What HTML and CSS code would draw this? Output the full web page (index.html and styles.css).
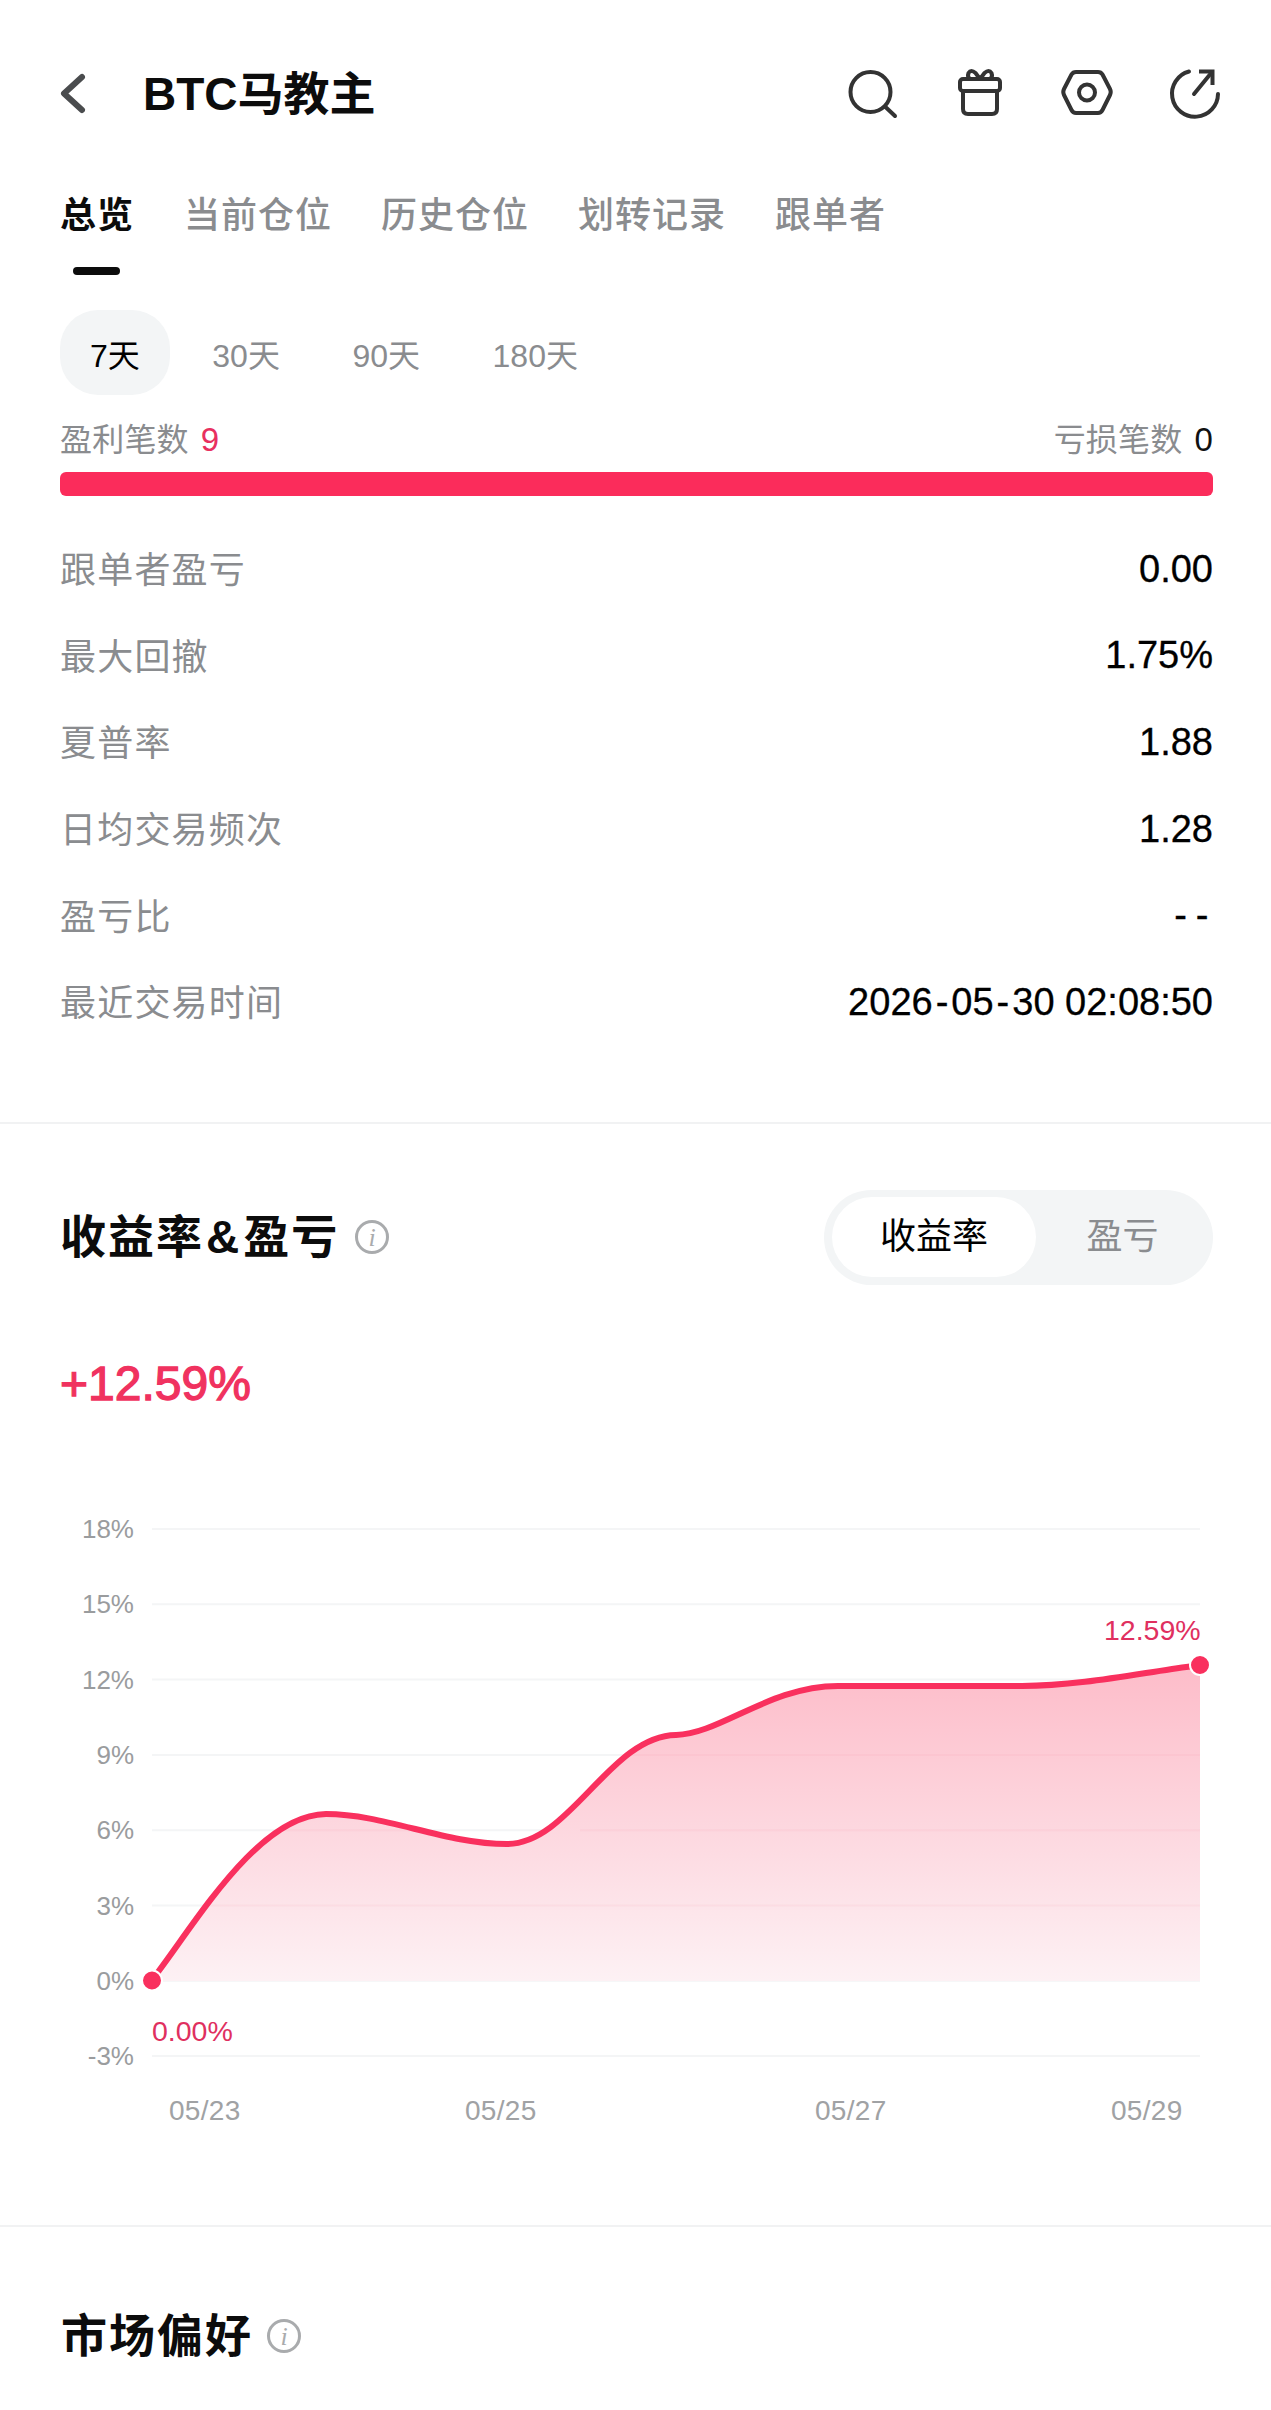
FILE: index.html
```html
<!DOCTYPE html>
<html lang="zh-CN">
<head>
    <meta charset="UTF-8">
    <meta name="viewport" content="width=device-width, initial-scale=1.0">
    <title>BTC马教主</title>
    <link rel="stylesheet" href="styles.css">
</head>
<body>
    <header class="header">
        <svg class="back" width="40" height="60" viewBox="0 0 40 60" fill="none" stroke="#4a4c4e" stroke-width="6" stroke-linecap="round" stroke-linejoin="round">
            <path d="M32 15L14 31.500L32 48"/>
        </svg>
        <div class="title">BTC马教主</div>
        <div class="actions">
            <svg width="60" height="60" viewBox="0 0 60 60" fill="none" stroke="#333" stroke-width="4" stroke-linecap="round" stroke-linejoin="round">
                <circle cx="29.500" cy="30" r="20"/>
                <path d="M44.500 45L54 54"/>
            </svg>
            <svg width="60" height="60" viewBox="0 0 60 60" fill="none" stroke="#333" stroke-width="4" stroke-linecap="round" stroke-linejoin="round">
                <rect x="11" y="17" width="40" height="12" rx="3"/>
                <path d="M14 29V47Q14 52 19 52H43Q48 52 48 47V29"/>
                <path d="M31 17L26.500 11Q22 7 19.500 11Q18 15 21 17M31 17L35.500 11Q40 7 42.500 11Q44 15 41 17"/>
            </svg>
            <svg width="60" height="60" viewBox="0 0 60 60" fill="none" stroke="#333" stroke-width="4" stroke-linecap="round" stroke-linejoin="round">
                <path d="M19 10H41Q44 10 45.500 12.500L53 27Q54.500 30 53 33L45.500 48Q44 51 41 51H19Q16 51 14.500 48L7 33Q5.500 30 7 27L14.500 12.500Q16 10 19 10Z"/>
                <circle cx="30" cy="30.500" r="8"/>
            </svg>
            <svg width="60" height="60" viewBox="0 0 60 60" fill="none" stroke="#333" stroke-width="4" stroke-linecap="round" stroke-linejoin="round">
                <path d="M24 9.500A23 23 0 1 0 53 32"/>
                <path d="M29 32L47 10"/>
                <path d="M34 9.500H47.500V23" stroke-linecap="butt" stroke-linejoin="miter"/>
            </svg>
        </div>
    </header>

    <nav class="tabs">
        <div class="tab active">总览<div class="tab-bar"></div></div>
        <div class="tab">当前仓位</div>
        <div class="tab">历史仓位</div>
        <div class="tab">划转记录</div>
        <div class="tab">跟单者</div>
    </nav>

    <div class="ranges">
        <div class="range active">7天</div>
        <div class="range">30天</div>
        <div class="range">90天</div>
        <div class="range">180天</div>
    </div>

    <div class="counts">
        <div>盈利笔数<span class="win">9</span></div>
        <div>亏损笔数<span class="loss">0</span></div>
    </div>
    <div class="ratio-bar"></div>

    <div class="stats">
        <div class="stat"><span class="label">跟单者盈亏</span><span class="val">0.00</span></div>
        <div class="stat"><span class="label">最大回撤</span><span class="val">1.75%</span></div>
        <div class="stat"><span class="label">夏普率</span><span class="val">1.88</span></div>
        <div class="stat"><span class="label">日均交易频次</span><span class="val">1.28</span></div>
        <div class="stat"><span class="label">盈亏比</span><span class="val wide"><span class="dash">-</span><span class="dash">-</span></span></div>
        <div class="stat"><span class="label">最近交易时间</span><span class="val">2026<span class="dash">-</span>05<span class="dash">-</span>30 02:08:50</span></div>
    </div>

    <div class="divider first"></div>

    <section class="returns">
        <div class="section-head">
            <h2>收益率<span class="amp">&amp;</span>盈亏</h2>
            <svg class="info" width="36" height="36" viewBox="0 0 36 36">
                <circle cx="18" cy="18" r="15.500" fill="none" stroke="#a9abad" stroke-width="3"/>
                <text x="18" y="27" class="info-i">i</text>
            </svg>
            <div class="toggle">
                <div class="toggle-item active">收益率</div>
                <div class="toggle-item">盈亏</div>
            </div>
        </div>
        <div class="total">+12.59%</div>

        <svg class="chart" width="1271" height="660" viewBox="0 0 1271 660">
            <defs>
                <linearGradient id="area" gradientUnits="userSpaceOnUse" x1="0" y1="185" x2="0" y2="501">
                    <stop offset="0" stop-color="#fdbcc9"/>
                    <stop offset="1" stop-color="#fdf1f4"/>
                </linearGradient>
            </defs>
            <g class="grid">
                <path d="M152 49H1200M152 124.300H1200M152 199.600H1200M152 274.900H1200M152 350.200H1200M152 425.500H1200M152 500.800H1200M152 576H1200"/>
            </g>
            <path fill="url(#area)" d="M152 500C195 440 260 335 326 334C385 334 445 364 507 364C570 364 610 256 676 255C720 254 770 206 838 206L1022 206C1080 206 1140 193 1200 185V501H152Z"/>
            <path class="grid-over" d="M625 274.900H1200M285 350.200H420M580 350.200H1200M205 425.500H1200"/>
            <path fill="none" stroke="#f9305e" stroke-width="6" stroke-linecap="round" d="M158 492C200 436 260 335 326 334C385 334 445 364 507 364C570 364 610 256 676 255C720 254 770 206 838 206L1022 206C1080 206 1140 193 1190 186.500"/>
            <circle cx="152" cy="500.500" r="10" fill="#f9305e" stroke="#fff" stroke-width="2"/>
            <circle cx="1200" cy="185" r="10" fill="#f9305e" stroke="#fff" stroke-width="2"/>
            <g class="y-labels">
                <text x="134" y="58">18%</text>
                <text x="134" y="133">15%</text>
                <text x="134" y="209">12%</text>
                <text x="134" y="284">9%</text>
                <text x="134" y="359">6%</text>
                <text x="134" y="435">3%</text>
                <text x="134" y="510">0%</text>
                <text x="134" y="585">-3%</text>
            </g>
            <g class="x-labels">
                <text x="169" y="640">05/23</text>
                <text x="465" y="640">05/25</text>
                <text x="815" y="640">05/27</text>
                <text x="1111" y="640">05/29</text>
            </g>
            <text class="point-label" x="152" y="561">0.00%</text>
            <text class="point-label" x="1104" y="160">12.59%</text>
        </svg>
    </section>

    <div class="divider"></div>

    <section class="market">
        <h2>市场偏好</h2>
        <svg class="info" width="36" height="36" viewBox="0 0 36 36">
            <circle cx="18" cy="18" r="15.500" fill="none" stroke="#a9abad" stroke-width="3"/>
            <text x="18" y="27" class="info-i">i</text>
        </svg>
    </section>
</body>
</html>
```

FILE: styles.css
```css
body {
    margin: 0;
    height: 2410px;
    overflow: hidden;
    background: #fff;
    color: #000;
    font-family: "Liberation Sans", "Noto Sans CJK SC", sans-serif;
}

.header {
    display: flex;
    align-items: center;
    height: 124px;
    margin-top: 30px;
    padding: 0 46px 0 50px;
}

.back {
    margin-right: 53px;
}

.title {
    margin-bottom: 5px;
    font-size: 46px;
    font-weight: 700;
    color: #0c0c0c;
}

.actions {
    display: flex;
    gap: 48px;
    margin-left: auto;
}

.tabs {
    display: flex;
    align-items: flex-start;
    gap: 49px;
    padding: 38px 0 0 60px;
}

.tab {
    font-size: 36px;
    line-height: 48px;
    font-weight: 500;
    letter-spacing: 1px;
    color: #8a8c8f;
}

.tab.active {
    margin-right: 1px;
    font-weight: 700;
    color: #0c0c0c;
}

.tab-bar {
    width: 47px;
    height: 8px;
    margin: 27px 0 0 13px;
    border-radius: 4px;
    background: #0c0c0c;
}

.ranges {
    display: flex;
    gap: 12.500px;
    margin: 35px 0 0 60px;
}

.range {
    height: 78px;
    padding: 7px 30px 0;
    border-radius: 38px;
    font-size: 32px;
    line-height: 78px;
    color: #8a8c8f;
}

.range.active {
    background: #f3f5f6;
    color: #000;
}

.counts {
    display: flex;
    justify-content: space-between;
    margin: 25px 58px 0 60px;
    font-size: 32px;
    line-height: 40px;
    letter-spacing: .2px;
    color: #8a8c8f;
}

.win {
    margin-left: 12px;
    font-size: 33px;
    color: #e8305f;
}

.loss {
    margin-left: 12px;
    font-size: 33px;
    color: #111;
}

.ratio-bar {
    height: 24px;
    margin: 12px 58px 0 60px;
    border-radius: 6px;
    background: #fb2c5b;
}

.stats {
    margin: 30px 58px 0 60px;
}

.stat {
    display: flex;
    align-items: center;
    justify-content: space-between;
    height: 86.600px;
    font-size: 36px;
    color: #8a8c8f;
}

.label {
    margin-bottom: 4px;
    letter-spacing: 1.200px;
}

.val {
    font-size: 38px;
    color: #000;
    -webkit-text-stroke: .3px #000;
}

.dash {
    padding: 0 3px;
}

.wide .dash {
    padding: 0 4.500px;
}

.divider {
    height: 2px;
    background: #f1f2f3;
}

.divider.first {
    margin-top: 76px;
}

.returns {
    padding-top: 66px;
}

.section-head {
    display: flex;
    align-items: center;
    padding: 0 58px 0 60px;
}

h2 {
    margin: 0;
    font-size: 46px;
    line-height: 60px;
    font-weight: 700;
    letter-spacing: 2px;
    color: #0c0c0c;
}

.amp {
    padding: 0 2px;
}

.info {
    margin-left: 15px;
}

.info-i {
    font-family: "Liberation Serif", serif;
    font-style: italic;
    font-size: 26px;
    fill: #a9abad;
    text-anchor: middle;
}

.toggle {
    display: flex;
    align-items: center;
    width: 389px;
    height: 95px;
    margin-left: auto;
    padding: 0 4px 0 8px;
    box-sizing: border-box;
    border-radius: 48px;
    background: #f3f5f6;
}

.toggle-item {
    flex: 1;
    height: 80px;
    font-size: 36px;
    line-height: 80px;
    text-align: center;
    color: #8a8c8f;
}

.toggle-item.active {
    flex: none;
    width: 204px;
    border-radius: 40px;
    background: #fff;
    color: #000;
}

.total {
    margin: 69px 0 0 60px;
    font-size: 48px;
    line-height: 60px;
    color: #f0325f;
    -webkit-text-stroke: 1.300px #f0325f;
}

.chart {
    display: block;
    margin: 66px 0 85px;
}

.grid path {
    fill: none;
    stroke: #f4f5f6;
    stroke-width: 2;
}

.grid-over {
    fill: none;
    stroke: rgba(240, 130, 150, .08);
    stroke-width: 2;
}

.y-labels text {
    font-size: 26px;
    fill: #9a9c9e;
    text-anchor: end;
}

.x-labels text {
    font-size: 28px;
    letter-spacing: .3px;
    fill: #a0a2a4;
}

.point-label {
    font-size: 28.500px;
    fill: #e0305f;
}

.market {
    display: flex;
    align-items: center;
    padding: 79px 0 0 61px;
}

.market .info {
    margin-left: 13px;
}
```
